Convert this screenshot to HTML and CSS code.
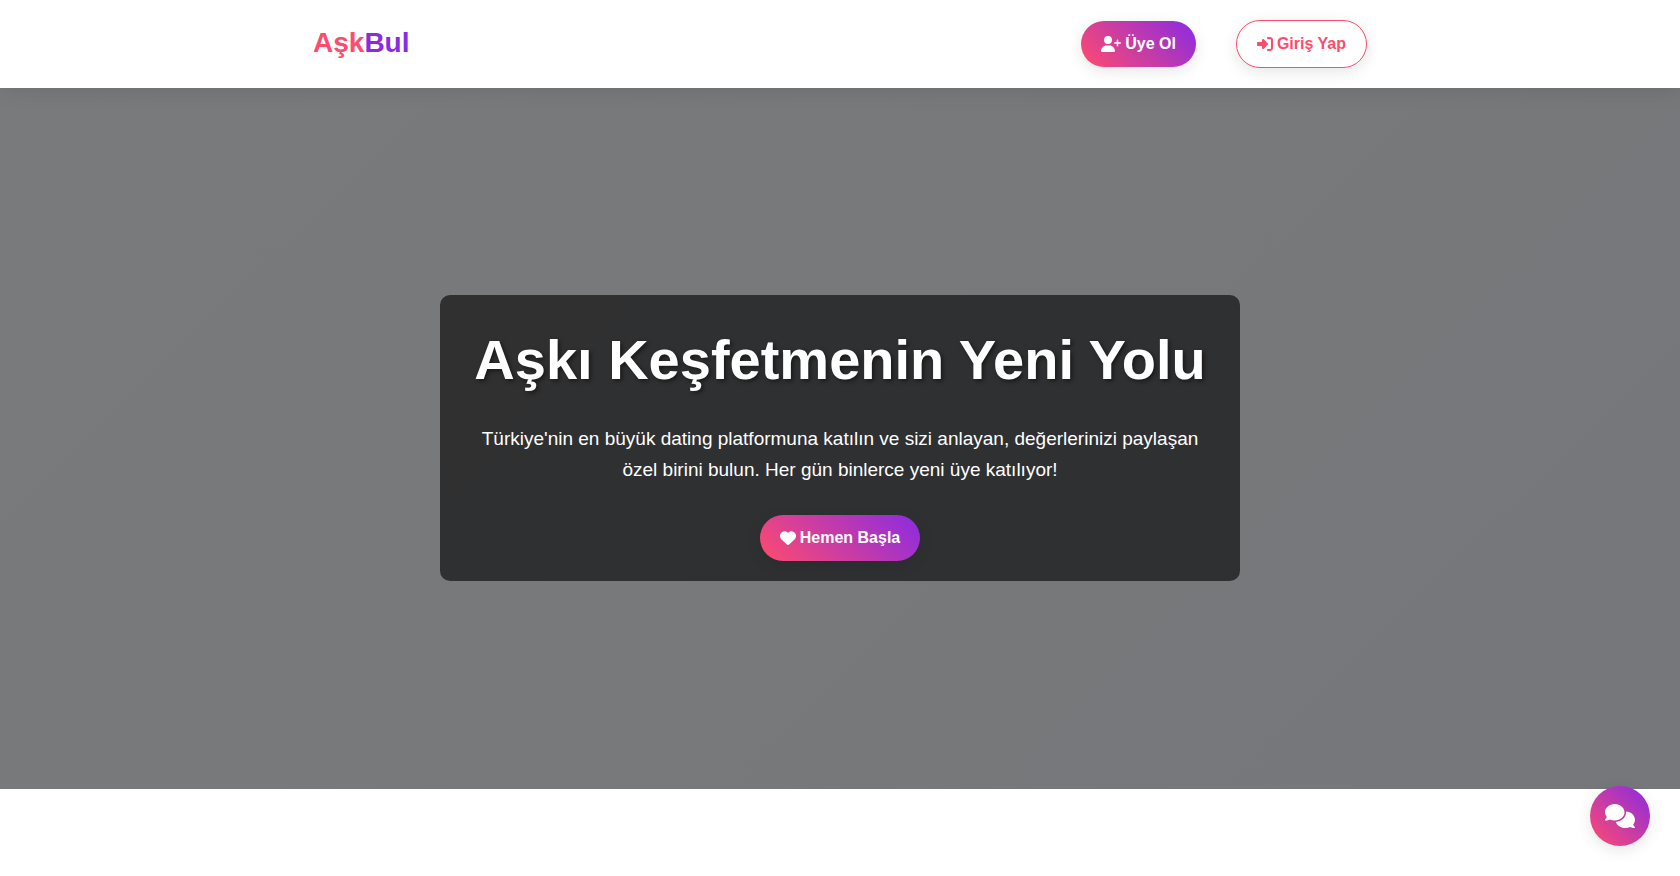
FILE: index.html
```html
<!DOCTYPE html>
<html lang="tr">
<head>
  <meta charset="UTF-8">
  <meta name="viewport" content="width=device-width, initial-scale=1.0">
  <title>AşkBul</title>
  <link rel="stylesheet" href="styles.css">
</head>
<body>

<header class="header">
  <nav class="navbar">
    <a href="#" class="logo">Aşk<span>Bul</span></a>
    <div class="nav-links">
      <a href="#uye-ol" class="btn btn-primary">
        <svg class="icon icon-wide" viewBox="0 0 640 512" aria-hidden="true"><path d="M96 128a128 128 0 1 1 256 0A128 128 0 1 1 96 128zM0 482.3C0 383.8 79.8 304 178.3 304h91.4C368.2 304 448 383.8 448 482.3c0 16.4-13.3 29.7-29.7 29.7H29.7C13.3 512 0 498.7 0 482.3zM504 312V248H440c-13.3 0-24-10.7-24-24s10.7-24 24-24h64V136c0-13.3 10.7-24 24-24s24 10.7 24 24v64h64c13.3 0 24 10.7 24 24s-10.7 24-24 24H552v64c0 13.3-10.7 24-24 24s-24-10.7-24-24z"/></svg>
        Üye Ol
      </a>
      <a href="#giris" class="btn btn-outline">
        <svg class="icon" viewBox="0 0 512 512" aria-hidden="true"><path d="M217.9 105.9L340.7 228.7c7.2 7.2 11.3 17.1 11.3 27.3s-4.1 20.1-11.3 27.3L217.9 406.1c-6.4 6.4-15 9.9-24 9.9c-18.7 0-33.9-15.2-33.9-33.9l0-62.1L32 320c-17.7 0-32-14.3-32-32l0-64c0-17.7 14.3-32 32-32l128 0 0-62.1c0-18.7 15.2-33.9 33.9-33.9c9 0 17.6 3.6 24 9.9zM352 416l64 0c17.7 0 32-14.3 32-32l0-256c0-17.7-14.3-32-32-32l-64 0c-17.7 0-32-14.3-32-32s14.3-32 32-32l64 0c53 0 96 43 96 96l0 256c0 53-43 96-96 96l-64 0c-17.7 0-32-14.3-32-32s14.3-32 32-32z"/></svg>
        Giriş Yap
      </a>
    </div>
  </nav>
</header>

<section class="hero">
  <div class="hero-content">
    <h1>Aşkı Keşfetmenin Yeni Yolu</h1>
    <p>Türkiye'nin en büyük dating platformuna katılın ve sizi anlayan, değerlerinizi paylaşan özel birini bulun. Her gün binlerce yeni üye katılıyor!</p>
    <a href="#uye-ol" class="btn btn-primary">
      <svg class="icon" viewBox="0 0 512 512" aria-hidden="true"><path d="M47.6 300.4L228.3 469.1c7.5 7 17.4 10.9 27.7 10.9s20.2-3.9 27.7-10.9L464.4 300.4c30.4-28.3 47.6-68 47.6-109.5v-5.8c0-69.9-50.5-129.5-119.4-141C347 36.5 300.6 51.4 268 84L256 96 244 84c-32.6-32.6-79-47.5-124.6-39.9C50.5 55.6 0 115.2 0 185.1v5.8c0 41.5 17.2 81.2 47.6 109.5z"/></svg>
      Hemen Başla
    </a>
  </div>
</section>

<button type="button" class="chat-button" aria-label="Canlı destek">
  <svg viewBox="0 0 640 512" aria-hidden="true"><path d="M208 352c114.9 0 208-78.8 208-176S322.9 0 208 0S0 78.8 0 176c0 38.6 14.7 74.3 39.6 103.4c-3.5 9.4-8.7 17.7-14.2 24.7c-4.8 6.2-9.7 11-13.3 14.3c-1.8 1.6-3.3 2.9-4.3 3.7c-.5 .4-.9 .7-1.1 .8l-.2 .2 0 0 0 0C1 327.2-1.4 334.4 .8 340.9S9.1 352 16 352c21.8 0 43.8-5.6 62.1-12.5c9.2-3.5 17.8-7.4 25.3-11.4C134.1 343.3 169.8 352 208 352zM448 176c0 112.3-99.1 196.9-216.5 207C255.8 457.4 336.4 512 432 512c38.2 0 73.9-8.7 104.7-23.9c7.5 4 16 7.9 25.2 11.4c18.3 6.9 40.3 12.5 62.1 12.5c6.9 0 13.1-4.5 15.2-11.1c2.1-6.6-.2-13.8-5.8-17.9l0 0 0 0-.2-.2c-.2-.2-.6-.4-1.1-.8c-1-.8-2.5-2-4.3-3.7c-3.6-3.3-8.5-8.1-13.3-14.3c-5.5-7-10.7-15.4-14.2-24.7c24.9-29 39.6-64.7 39.6-103.4c0-92.8-84.9-168.9-192.6-175.5c.4 5.1 .6 10.3 .6 15.5z"/></svg>
</button>

</body>
</html>
```
FILE: styles.css
```css
:root {
  --primary: #ff4b6e;
  --secondary: #8a2be2;
  --gradient: linear-gradient(45deg, var(--primary), var(--secondary));
}

* {
  margin: 0;
  padding: 0;
  box-sizing: border-box;
}

body {
  font-family: "Liberation Sans", Arial, sans-serif;
  font-size: 16px;
  line-height: 26px;
  background: #fff;
}

a {
  text-decoration: none;
}

.header {
  position: sticky;
  top: 0;
  z-index: 10;
  padding: 20px;
  background: #fff;
  box-shadow: 0 2px 20px rgba(0, 0, 0, 0.1);
}

.navbar {
  display: flex;
  align-items: center;
  justify-content: space-between;
  max-width: 1054px;
  margin: 0 auto;
}

.logo {
  font-size: 28px;
  line-height: 44px;
  margin-bottom: 2px;
  font-weight: bold;
  color: var(--primary);
}

.logo span {
  color: var(--secondary);
}

.nav-links {
  display: flex;
  align-items: center;
  gap: 40px;
}

.btn {
  display: inline-flex;
  align-items: center;
  gap: 4px;
  padding: 10px 20px;
  border-radius: 25px;
  font-weight: bold;
  box-shadow: 0 4px 15px rgba(0, 0, 0, 0.1);
}

.btn-primary {
  background: var(--gradient);
  color: #fff;
}

.btn-outline {
  background: #fff;
  border: 1px solid var(--primary);
  color: var(--primary);
}

.icon {
  width: 16px;
  height: 16px;
  fill: currentColor;
}

.icon-wide {
  width: 20px;
}

.hero {
  display: flex;
  align-items: center;
  justify-content: center;
  min-height: 80vh;
  padding: 20px;
  background: linear-gradient(135deg, #797a7b, #76777a);
  text-align: center;
}

.hero-content {
  max-width: 800px;
  padding: 20px;
  border-radius: 10px;
  background: rgba(0, 0, 0, 0.6);
  color: #fff;
}

.hero h1 {
  margin-bottom: 18px;
  font-size: 56px;
  line-height: 90px;
  text-shadow: 2px 2px 4px rgba(0, 0, 0, 0.5);
}

.hero p {
  margin-bottom: 30px;
  padding: 0 10px;
  font-size: 19px;
  line-height: 31px;
}

.chat-button {
  position: fixed;
  right: 30px;
  bottom: 30px;
  z-index: 20;
  display: flex;
  align-items: center;
  justify-content: center;
  width: 60px;
  height: 60px;
  border: none;
  border-radius: 50%;
  background: var(--gradient);
  color: #fff;
  box-shadow: 0 4px 15px rgba(0, 0, 0, 0.1);
  cursor: pointer;
}

.chat-button svg {
  width: 30px;
  height: 24px;
  fill: currentColor;
}
```
